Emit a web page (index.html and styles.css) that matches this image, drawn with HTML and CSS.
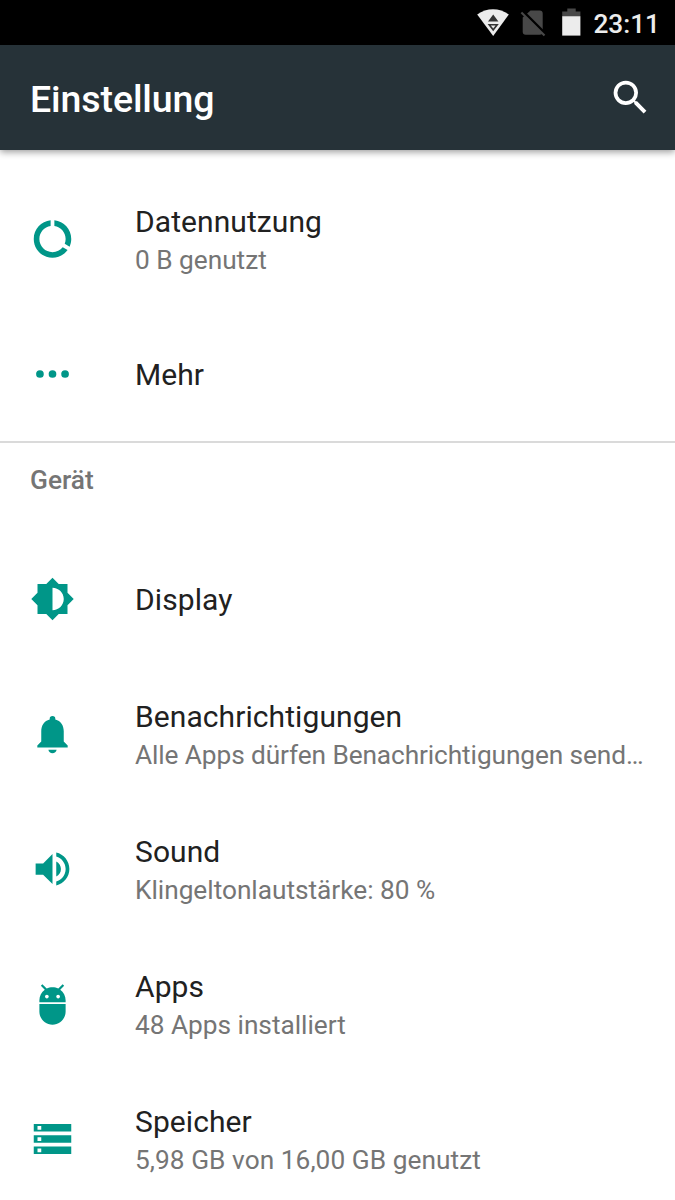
FILE: index.html
```html
<!DOCTYPE html>
<html lang="de">
<head>
<meta charset="utf-8">
<title>Einstellung</title>
<link rel="stylesheet" href="styles.css">
</head>
<body>
<div class="screen">
  <div class="status-bar">
    <svg class="status-icons" viewBox="0 0 120 45" aria-hidden="true">
      <path fill="#ececec" d="M12.2 14.6C21.6 7.4 34.4 7.4 43.8 14.6L28.2 35.9Z"/>
      <path fill="#333" d="M28.2 14.6l5.2 7h-10.4zM22.6 24h11.2l-5.6 7.2z"/>
      <path fill="#ececec" d="M25.9 25.5h4.6l-2.3 3z"/>
      <path fill="#484848" d="M65.5 10.6h9.2a3 3 0 0 1 3 3v18.1a3 3 0 0 1-3 3h-14a3 3 0 0 1-3-3V17.4z"/>
      <path stroke="#000" stroke-width="3" d="M57.5 11l23 23"/>
      <path stroke="#484848" stroke-width="2.1" d="M56.4 12.6l23.1 22.8"/>
      <path fill="#484848" d="M97.2 16.2v-4.8h5.1V8.5h8.4v2.9h4.7v4.8z"/>
      <path fill="#ececec" d="M97.2 16.2h18.2v19.4h-18.2z"/>
    </svg>
    <span class="clock">23:11</span>
  </div>
  <header class="app-bar">
    <h1 class="app-title">Einstellung</h1>
    <svg class="search" viewBox="0 0 24 24" aria-label="Suchen"><path d="M15.5 14h-.79l-.28-.27A6.47 6.47 0 0 0 16 9.5 6.5 6.5 0 1 0 9.5 16c1.61 0 3.09-.59 4.23-1.57l.27.28v.79l5 4.99L20.49 19l-4.99-5zm-6 0a4.5 4.5 0 1 1 0-9 4.5 4.5 0 0 1 0 9z"/></svg>
  </header>
  <main class="list">
    <div class="row">
      <svg class="icon" viewBox="0 0 24 24"><path d="M13 2.05v3.03c3.39.49 6 3.39 6 6.92 0 .9-.18 1.75-.48 2.54l2.6 1.53c.56-1.24.88-2.62.88-4.07 0-5.18-3.95-9.45-9-9.95zM12 19c-3.87 0-7-3.13-7-7 0-3.53 2.61-6.43 6-6.92V2.05c-5.06.5-9 4.76-9 9.95 0 5.52 4.47 10 9.99 10 3.31 0 6.24-1.61 8.06-4.09l-2.6-1.53C16.17 17.98 14.21 19 12 19z"/></svg>
      <div class="text"><div class="title">Datennutzung</div><div class="summary">0 B genutzt</div></div>
    </div>
    <div class="row">
      <svg class="icon" viewBox="0 0 24 24"><circle cx="5.3" cy="12" r="2.05"/><circle cx="12" cy="12" r="2.05"/><circle cx="18.7" cy="12" r="2.05"/></svg>
      <div class="text"><div class="title">Mehr</div></div>
    </div>
    <h2 class="category">Gerät</h2>
    <div class="row">
      <svg class="icon" viewBox="0 0 24 24"><path d="M20 15.31L23.31 12 20 8.69V4h-4.69L12 .69 8.69 4H4v4.69L.69 12 4 15.31V20h4.69L12 23.31 15.31 20H20v-4.69zM12 18V6c3.31 0 6 2.69 6 6s-2.69 6-6 6z"/></svg>
      <div class="text"><div class="title">Display</div></div>
    </div>
    <div class="row">
      <svg class="icon" viewBox="0 0 24 24"><path d="M9.8 20.4h4.4c-.2 1.1-1.1 1.8-2.2 1.8s-2-.7-2.2-1.8zM18 16v-5.5c0-3.1-1.6-5.6-4.5-6.3v-.3a1.5 1.5 0 0 0-3 0v.3C7.6 4.9 6 7.4 6 10.5V16l-2.1 2.1v1.1h16.2v-1.1z"/></svg>
      <div class="text"><div class="title">Benachrichtigungen</div><div class="summary long">Alle Apps dürfen Benachrichtigungen send…</div></div>
    </div>
    <div class="row">
      <svg class="icon" viewBox="0 0 24 24"><path d="M3 9v6h4l5 5V4L7 9H3zm13.5 3c0-1.77-1.02-3.29-2.5-4.03v8.05c1.48-.73 2.5-2.25 2.5-4.02zM14 3.23v2.06c2.89.86 5 3.54 5 6.71s-2.11 5.85-5 6.71v2.06c4.01-.91 7-4.49 7-8.77s-2.99-7.86-7-8.77z"/></svg>
      <div class="text"><div class="title">Sound</div><div class="summary">Klingeltonlautstärke: 80 %</div></div>
    </div>
    <div class="row">
      <svg class="icon" viewBox="0 0 24 24"><path d="M5 16c0 3.87 3.13 7 7 7s7-3.13 7-7v-4H5v4zM16.12 4.37l2.1-2.1-.82-.83-2.3 2.31C14.16 3.28 13.12 3 12 3s-2.16.28-3.09.75L6.6 1.44l-.82.83 2.1 2.1C6.14 5.64 5 7.68 5 10v1h14v-1c0-2.32-1.14-4.36-2.88-5.63zM9 9c-.55 0-1-.45-1-1s.45-1 1-1 1 .45 1 1-.45 1-1 1zm6 0c-.55 0-1-.45-1-1s.45-1 1-1 1 .45 1 1-.45 1-1 1z"/></svg>
      <div class="text"><div class="title">Apps</div><div class="summary">48 Apps installiert</div></div>
    </div>
    <div class="row">
      <svg class="icon" viewBox="0 0 24 24"><path d="M2 20h20v-4H2v4zm2-3h2v2H4v-2zM2 4v4h20V4H2zm4 3H4V5h2v2zm-4 7h20v-4H2v4zm2-3h2v2H4v-2z"/></svg>
      <div class="text"><div class="title">Speicher</div><div class="summary wide">5,98 GB von 16,00 GB genutzt</div></div>
    </div>
  </main>
</div>
</body>
</html>
```
FILE: styles.css
```css
* { box-sizing: border-box; }
body { margin: 0; background: #fff; font-family: Roboto, "Noto Sans", sans-serif; }
.screen { width: 675px; height: 1200px; overflow: hidden; display: flex; flex-direction: column; }
.status-bar {
  flex: none; height: 45px; background: #000; padding-right: 15px;
  display: flex; align-items: center; justify-content: flex-end;
}
.status-icons { width: 120px; height: 45px; margin-right: 8px; }
.clock { color: #ececec; font-size: 26.25px; font-weight: 500; line-height: 44px; padding-top: 2px; }
.app-bar {
  flex: none; height: 105px; padding: 0 22.5px 0 30px; background: #263238; z-index: 1;
  display: flex; align-items: center; justify-content: space-between;
  box-shadow: 0 2px 7px rgba(0, 0, 0, .4);
}
.app-title { margin: 0; padding-top: 3px; color: #fff; font-size: 37.5px; font-weight: 500; line-height: 44px; letter-spacing: -.1px; }
.search { width: 45px; height: 45px; fill: #fff; }
.list { flex: none; padding-top: 21px; }
.row { height: 135px; padding: 0 30px; display: flex; align-items: center; }
.icon { flex: none; width: 45px; height: 45px; margin-right: 60px; fill: #009688; transform: translateY(.5px); }
.text { flex: 1; min-width: 0; padding-top: 2px; }
.title { color: #212121; font-size: 30px; line-height: 40px; letter-spacing: .08px; }
.summary {
  color: #757575; font-size: 26.25px; line-height: 36px;
  white-space: nowrap; letter-spacing: -.02px;
}
.summary.long { letter-spacing: -.1px; }
.summary.wide { letter-spacing: .05px; }
.category {
  margin: 0; height: 90px; padding: 19px 30px 0; border-top: 2px solid #dadada;
  color: #757575; font-size: 26.25px; font-weight: 500; line-height: 36px;
}
```
